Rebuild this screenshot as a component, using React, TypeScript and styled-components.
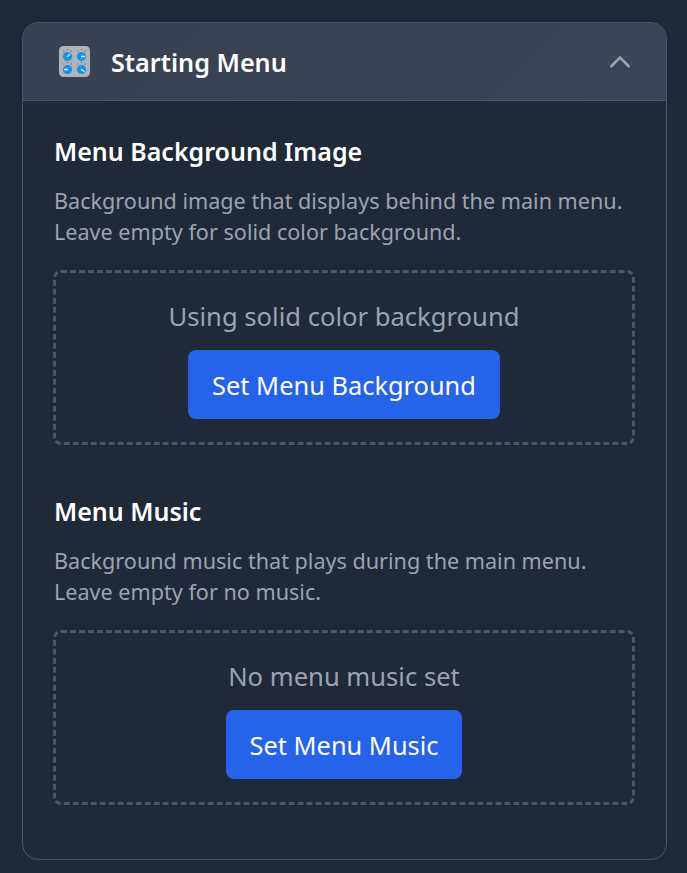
import React from 'react';
import styled, { createGlobalStyle } from 'styled-components';

const GlobalStyle = createGlobalStyle`
  html, body {
    margin: 0;
    padding: 0;
    background: #1f2937;
    font-family: 'Noto Sans', 'Open Sans', sans-serif;
  }
  * { box-sizing: border-box; }
`;

const Page = styled.div`
  height: 873px;
  padding: 22px 20px 13px 22px;
`;

const Card = styled.section`
  height: 838px;
  border: 1px solid #4b5563;
  border-radius: 16px;
  overflow: hidden;
  background: #1f2937;
`;

const Header = styled.header`
  height: 78px;
  display: flex;
  align-items: center;
  padding: 0 34px 0 36px;
  background: linear-gradient(135deg, #374151, #3b4556);
  border-bottom: 1px solid #4b5563;
`;

const HeaderTitle = styled.h2`
  flex: 1;
  margin: 0 0 0 21px;
  color: #fff;
  font-size: 25.2px;
  font-weight: 600;
`;

const Content = styled.div`
  padding: 31px 31px 0 30px;
`;

const Section = styled.div`
  margin-bottom: 47px;
`;

const SectionTitle = styled.h3`
  margin: 0 0 15px;
  padding-left: 1px;
  color: #fff;
  font-size: 25px;
  line-height: 38px;
  font-weight: 600;
`;

const Description = styled.p`
  margin: 0 0 23px;
  padding-left: 1px;
  color: #9ca3af;
  font-size: 21.6px;
  line-height: 31px;
`;

const DropZone = styled.div`
  height: 175px;
  border: 3px dashed #4b5563;
  border-radius: 8px;
  display: flex;
  flex-direction: column;
  align-items: center;
  padding-top: 24px;
`;

const Status = styled.div`
  color: #9ca3af;
  font-size: 25.6px;
  line-height: 40px;
  margin-bottom: 13px;
`;

const ActionButton = styled.button`
  height: 69px;
  padding: 0 24px;
  border: 0;
  border-radius: 8px;
  background: #2563eb;
  color: #fff;
  font-family: inherit;
  font-size: 25.4px;
`;

function KnobsIcon() {
  const knobs = [
    { x: 8.5, y: 10.5, a: -45 },
    { x: 22.5, y: 10.5, a: 0 },
    { x: 8.5, y: 23.5, a: 180 },
    { x: 22.5, y: 23.5, a: 35 },
  ];
  return (
    <svg width="31" height="31" viewBox="0 0 31 31">
      <rect width="31" height="31" rx="4.5" fill="#b1b3b5" />
      {knobs.map((k) => (
        <g key={`${k.x}-${k.y}`}>
          <path
            d={`M${k.x - 4.5} ${k.y - 5.5}h1.4M${k.x - 0.7} ${k.y - 7}h1.4M${k.x + 3} ${k.y - 5.5}h1.4`}
            stroke="#6b6f74"
            strokeWidth="1.2"
          />
          <circle cx={k.x} cy={k.y} r="4.6" fill="#1392ee" />
          <path
            d={`M${k.x - 0.5} ${k.y}h4`}
            stroke="#e8f1f8"
            strokeWidth="1.3"
            transform={`rotate(${k.a} ${k.x} ${k.y})`}
          />
        </g>
      ))}
    </svg>
  );
}

function ChevronUp() {
  return (
    <svg width="24" height="24" viewBox="0 0 24 24" fill="none" stroke="#9ca3af" strokeWidth="2.6">
      <path d="M2.5 17 L12 7.5 L21.5 17" />
    </svg>
  );
}

export default function App() {
  return (
    <Page>
      <GlobalStyle />
      <Card>
        <Header>
          <KnobsIcon />
          <HeaderTitle>Starting Menu</HeaderTitle>
          <ChevronUp />
        </Header>
        <Content>
          <Section>
            <SectionTitle>Menu Background Image</SectionTitle>
            <Description>
              Background image that displays behind the main menu. Leave empty for solid color background.
            </Description>
            <DropZone>
              <Status>Using solid color background</Status>
              <ActionButton>Set Menu Background</ActionButton>
            </DropZone>
          </Section>
          <Section>
            <SectionTitle>Menu Music</SectionTitle>
            <Description>
              Background music that plays during the main menu. Leave empty for no music.
            </Description>
            <DropZone>
              <Status>No menu music set</Status>
              <ActionButton>Set Menu Music</ActionButton>
            </DropZone>
          </Section>
        </Content>
      </Card>
    </Page>
  );
}
